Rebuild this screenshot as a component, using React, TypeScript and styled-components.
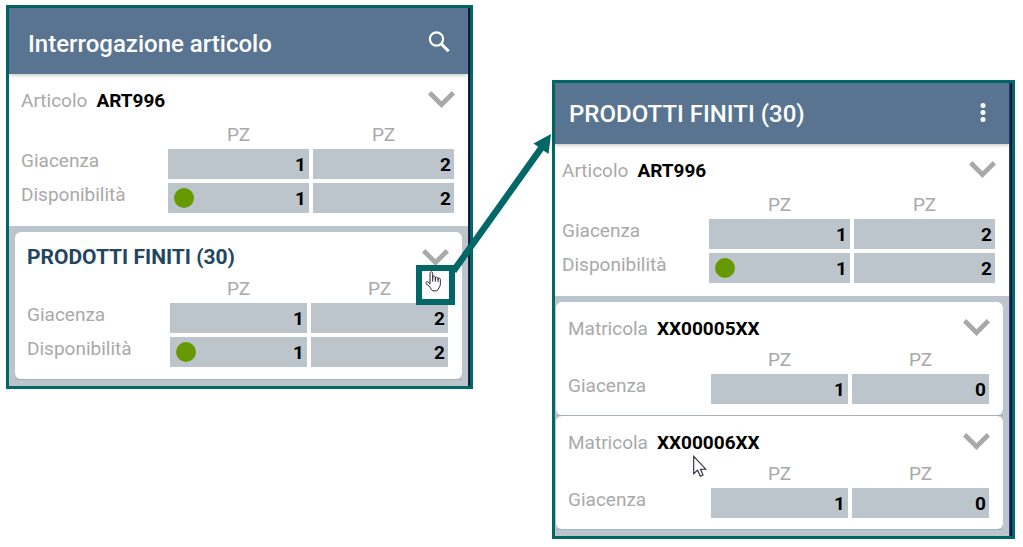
import React from "react";
import styled, { createGlobalStyle } from "styled-components";

const teal = "#026766";

const GlobalStyle = createGlobalStyle`
  * { box-sizing: border-box; }
  body {
    margin: 0;
    background: #fff;
    font-family: Roboto, "Liberation Sans", sans-serif;
  }
`;

const Page = styled.main`
  display: grid;
  grid-template-columns: 467fr 463fr;
  align-items: start;
  column-gap: 79px;
  padding: 5px 8px 8px 6px;
`;

const Panel = styled.section<{ $drop?: number; $edge: number }>`
  position: relative;
  min-width: 0;
  margin-top: ${(p) => p.$drop ?? 0}px;
  padding-right: ${(p) => p.$edge}px;
  border: 3px solid ${teal};
  background: linear-gradient(to left, #0b0f22 1px, #24407f 2px);
`;

const Header = styled.header<{ $height: number; $inset: number }>`
  position: relative;
  display: flex;
  align-items: flex-end;
  justify-content: space-between;
  height: ${(p) => p.$height}px;
  padding: 0 18px 16px ${(p) => p.$inset}px;
  background: #587490;
  color: #fff;
  box-shadow: 0 1px 4px rgba(0, 0, 0, 0.25);
`;

const HeaderTitle = styled.h1`
  margin: 0;
  font-size: 24px;
  line-height: 28px;
  font-weight: 500;
  white-space: nowrap;
`;

const IconButton = styled.button`
  display: flex;
  padding: 0;
  border: 0;
  background: none;
  color: inherit;
  cursor: pointer;
`;

const HeaderButton = styled(IconButton)`
  margin-bottom: 5px;
`;

const Summary = styled.div<{ $inset: number }>`
  padding: 12px 14px 9px ${(p) => p.$inset}px;
  background: #fff;
`;

const List = styled.div<{ $inset: number }>`
  padding: 6px 6px 6px ${(p) => p.$inset}px;
  background: #bcc5cb;
`;

const CardSlot = styled.div`
  border-bottom: 1px solid #a7b1b8;
`;

const Card = styled.article<{ $bottom: number }>`
  position: relative;
  padding: 12px 14px ${(p) => p.$bottom}px 12px;
  border-radius: 6px;
  background: #fff;
`;

const Row = styled.div<{ $gap: number }>`
  display: flex;
  align-items: center;
  height: 26px;
  margin-bottom: ${(p) => p.$gap}px;
  font-size: 19px;
  line-height: 26px;
`;

const Caption = styled.span`
  padding-top: 4px;
  margin-right: 9px;
  color: #a9a9a9;
`;

const Code = styled.strong`
  flex: 1;
  padding-top: 4px;
  color: #000;
  font-weight: 700;
`;

const CardTitle = styled.h2`
  flex: 1;
  margin: 0;
  color: #24455f;
  font-size: 21px;
  line-height: 26px;
  font-weight: 700;
`;

const Chevron = styled(IconButton)`
  margin-right: -1px;
  color: #a9a9a9;
`;

const Table = styled.table`
  width: calc(100% + 8px);
  margin: 0 -4px;
  table-layout: fixed;
  border-collapse: separate;
  border-spacing: 4px;
  font-size: 19px;
`;

const LabelHead = styled.td<{ $width: number }>`
  width: ${(p) => p.$width}px;
  padding: 0;
`;

const Unit = styled.th`
  height: 20px;
  padding: 0;
  color: #a9a9a9;
  font-weight: 400;
  line-height: 20px;
`;

const RowLabel = styled.th`
  padding: 0;
  color: #a9a9a9;
  font-weight: 400;
  line-height: 24px;
  text-align: left;
  vertical-align: top;
`;

const Cell = styled.td`
  height: 30px;
  padding: 0 3px 0 6px;
  background: #bcc5cb;
`;

const Value = styled.div`
  display: flex;
  align-items: center;
  justify-content: flex-end;
  height: 30px;
  font-weight: 700;
`;

const Dot = styled.span`
  width: 20px;
  height: 20px;
  margin-right: auto;
  border-radius: 50%;
  background: #669900;
`;

const Highlight = styled.div`
  position: absolute;
  top: 33px;
  right: 7px;
  width: 39px;
  height: 40px;
  padding-left: 3px;
  border: 6px solid ${teal};
  background: #fff;
`;

const Arrow = styled.svg`
  position: absolute;
  z-index: 2;
  top: 122px;
  right: -82px;
  width: 108px;
  height: 150px;
`;

const Pointer = styled.svg`
  position: absolute;
  top: 39px;
  left: 137px;
`;

type Line = { label: string; values: number[]; available?: boolean };

function ChevronButton() {
  return (
    <Chevron type="button" aria-label="Espandi">
      <svg width="27" height="17" viewBox="0 0 27 17" fill="currentColor">
        <path d="M0 3.4 3.3 0 13.5 10.2 23.7 0 27 3.4 13.5 17z" />
      </svg>
    </Chevron>
  );
}

function Quantities({ lines, labelWidth }: { lines: Line[]; labelWidth: number }) {
  return (
    <Table>
      <thead>
        <tr>
          <LabelHead $width={labelWidth} />
          <Unit scope="col">PZ</Unit>
          <Unit scope="col">PZ</Unit>
        </tr>
      </thead>
      <tbody>
        {lines.map((line) => (
          <tr key={line.label}>
            <RowLabel scope="row">{line.label}</RowLabel>
            {line.values.map((value, i) => (
              <Cell key={i}>
                <Value>
                  {line.available && i === 0 && <Dot />}
                  {value}
                </Value>
              </Cell>
            ))}
          </tr>
        ))}
      </tbody>
    </Table>
  );
}

const stock: Line[] = [
  { label: "Giacenza", values: [1, 2] },
  { label: "Disponibilità", values: [1, 2], available: true },
];

const serialStock: Line[] = [{ label: "Giacenza", values: [1, 0] }];

function ArticleSummary({ inset }: { inset: number }) {
  return (
    <Summary $inset={inset}>
      <Row $gap={9}>
        <Caption>Articolo</Caption>
        <Code>ART996</Code>
        <ChevronButton />
      </Row>
      <Quantities lines={stock} labelWidth={143} />
    </Summary>
  );
}

export default function App() {
  return (
    <>
      <GlobalStyle />
      <Page>
        <Panel $edge={2}>
          <Header $height={66} $inset={19}>
            <HeaderTitle>Interrogazione articolo</HeaderTitle>
            <HeaderButton type="button" aria-label="Cerca">
              <svg width="22" height="22" viewBox="0 0 22 22" fill="none" stroke="currentColor">
                <circle cx="8.5" cy="8" r="6.6" strokeWidth="2.2" />
                <path d="M13 12.6 20.6 20.2" strokeWidth="3" />
              </svg>
            </HeaderButton>
          </Header>
          <ArticleSummary inset={12} />
          <List $inset={6}>
            <CardSlot>
              <Card $bottom={8}>
                <Row $gap={5}>
                  <CardTitle>PRODOTTI FINITI (30)</CardTitle>
                  <ChevronButton />
                </Row>
                <Quantities lines={stock} labelWidth={139} />
                <Highlight>
                  <svg width="17" height="22" viewBox="0 0 51 66" fill="#fff" stroke="#26263a" strokeWidth="3" strokeLinejoin="round" aria-hidden="true">
                    <path d="M15 39V7c0-6 8-6 8 0v18-7c0-4 7-4 8 1v7-5c0-4 7-4 8 1v5-3c0-4 7-3 7 1v15c0 7-5 10-6 14-2 8-17 7-21 2-2-4-3-7-6-10L3 38c-2-6 5-8 8-4z" />
                    <path d="M23 25v7M31 25v7M39 27v6" />
                  </svg>
                </Highlight>
              </Card>
            </CardSlot>
          </List>
          <Arrow viewBox="0 0 108 150" aria-hidden="true">
            <path d="M9.5 141 98 17" stroke={teal} strokeWidth="6.5" />
            <path d="M107 4 89.5 13.500 104.500 24z" fill={teal} />
          </Arrow>
        </Panel>

        <Panel $drop={75} $edge={3}>
          <Header $height={61} $inset={14}>
            <HeaderTitle>PRODOTTI FINITI (30)</HeaderTitle>
            <HeaderButton type="button" aria-label="Altre opzioni">
              <svg width="16" height="20" viewBox="0 0 16 20" fill="currentColor">
                <circle cx="8" cy="2.500" r="2.500" />
                <circle cx="8" cy="9.500" r="2.500" />
                <circle cx="8" cy="16.500" r="2.500" />
              </svg>
            </HeaderButton>
          </Header>
          <ArticleSummary inset={7} />
          <List $inset={1}>
            {["XX00005XX", "XX00006XX"].map((code, i) => (
              <CardSlot key={code}>
                <Card $bottom={7}>
                  <Row $gap={6}>
                    <Caption>Matricola</Caption>
                    <Code>{code}</Code>
                    <ChevronButton />
                  </Row>
                  <Quantities lines={serialStock} labelWidth={139} />
                  {i === 1 && (
                    <Pointer width="14" height="23" viewBox="0 0 14 23" fill="#fff" stroke="#26263a" strokeWidth="1.1" aria-hidden="true">
                      <path d="M.7 1.300V18.700L4.600 15.200 7.300 21.200 10 20 7.500 14.200H12.800z" />
                    </Pointer>
                  )}
                </Card>
              </CardSlot>
            ))}
          </List>
        </Panel>
      </Page>
    </>
  );
}
